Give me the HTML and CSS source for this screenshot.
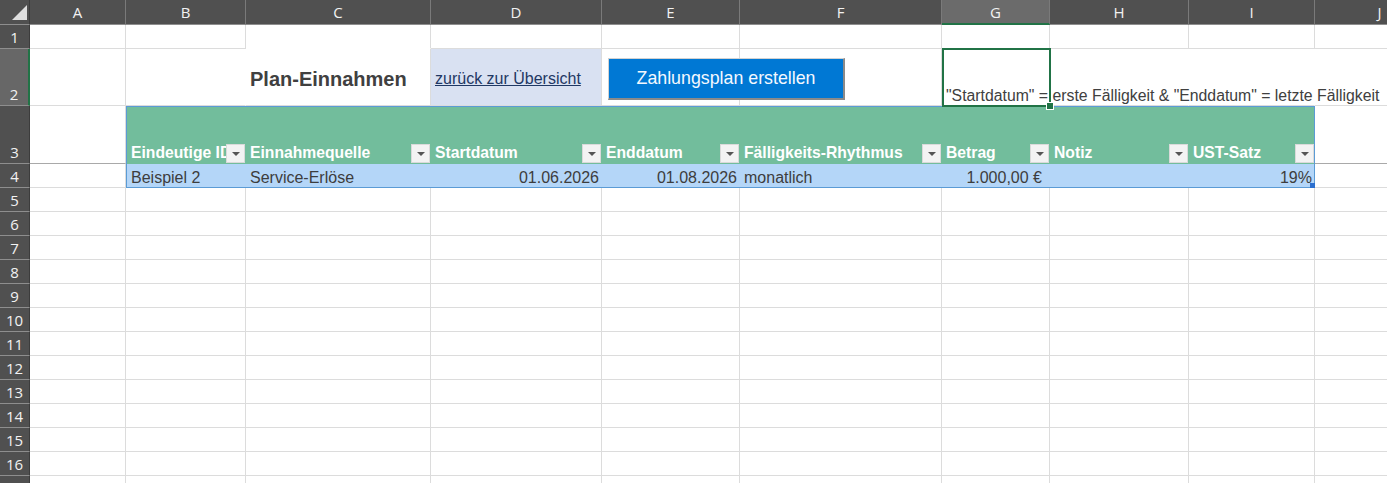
FILE: index.html
```html
<!DOCTYPE html>
<html lang="de">
<head>
<meta charset="utf-8">
<title>Plan-Einnahmen</title>
<link rel="stylesheet" href="styles.css">
</head>
<body>
<div class="sheet">
  <div class="hrow">
    <div class="corner"><svg width="30" height="24" viewBox="0 0 30 24"><polygon points="27,5 27,20 12,20" fill="#dedede"/></svg></div>
    <div class="ch wA">A</div><div class="ch wB">B</div><div class="ch wC">C</div><div class="ch wD">D</div><div class="ch wE">E</div><div class="ch wF">F</div><div class="ch wG sel">G</div><div class="ch wH">H</div><div class="ch wI">I</div><div class="ch wJ">J</div>
  </div>

  <div class="row r24">
    <div class="rh">1</div>
    <div class="c wA"></div><div class="c wB"></div><div class="c wC nob"></div><div class="c wD"></div><div class="c wE"></div><div class="c wF"></div><div class="c wG"></div><div class="c wH"></div><div class="c wI"></div><div class="c wJ"></div>
  </div>

  <div class="row r57">
    <div class="rh sel">2</div>
    <div class="c wA"></div>
    <div class="c wB nor"></div>
    <div class="c wC title">Plan-Einnahmen</div>
    <div class="c wD linkcell"><a class="link" href="#">zurück zur Übersicht</a></div>
    <div class="c wE btncell"><button class="macro" type="button">Zahlungsplan erstellen</button></div>
    <div class="c wF"></div>
    <div class="c wG nor note"><span class="notetext">"Startdatum" = erste Fälligkeit &amp; "Enddatum" = letzte Fälligkeit</span></div>
    <div class="c wH nor"></div><div class="c wI nor"></div><div class="c wJ nor"></div>
  </div>

  <div class="band">
    <div class="stack">
      <div class="rh r58">3</div>
      <div class="rh r24">4</div>
    </div>
    <div class="stack">
      <div class="c wA r58 frz"></div>
      <div class="c wA r24"></div>
    </div>
    <div class="xtable">
      <div class="thead">
        <div class="th tB"><span class="lbl">Eindeutige ID</span><span class="fbtn"></span></div>
        <div class="th tC"><span class="lbl">Einnahmequelle</span><span class="fbtn"></span></div>
        <div class="th tD"><span class="lbl">Startdatum</span><span class="fbtn"></span></div>
        <div class="th tE"><span class="lbl">Enddatum</span><span class="fbtn"></span></div>
        <div class="th tF"><span class="lbl">Fälligkeits-Rhythmus</span><span class="fbtn"></span></div>
        <div class="th tG"><span class="lbl">Betrag</span><span class="fbtn"></span></div>
        <div class="th tH"><span class="lbl">Notiz</span><span class="fbtn"></span></div>
        <div class="th tI"><span class="lbl">UST-Satz</span><span class="fbtn"></span></div>
      </div>
      <div class="tbody">
        <div class="td tB">Beispiel 2</div>
        <div class="td tC">Service-Erlöse</div>
        <div class="td tD num">01.06.2026</div>
        <div class="td tE num">01.08.2026</div>
        <div class="td tF">monatlich</div>
        <div class="td tG num money">1.000,00 €</div>
        <div class="td tH"></div>
        <div class="td tI num pct">19%</div>
      </div>
    </div>
    <div class="stack">
      <div class="c wJ r58 frz"></div>
      <div class="c wJ r24"></div>
    </div>
  </div>

  <div class="row r24"><div class="rh">5</div><div class="c wA"></div><div class="c wB"></div><div class="c wC"></div><div class="c wD"></div><div class="c wE"></div><div class="c wF"></div><div class="c wG"></div><div class="c wH"></div><div class="c wI"></div><div class="c wJ"></div></div>
  <div class="row r24"><div class="rh">6</div><div class="c wA"></div><div class="c wB"></div><div class="c wC"></div><div class="c wD"></div><div class="c wE"></div><div class="c wF"></div><div class="c wG"></div><div class="c wH"></div><div class="c wI"></div><div class="c wJ"></div></div>
  <div class="row r24"><div class="rh">7</div><div class="c wA"></div><div class="c wB"></div><div class="c wC"></div><div class="c wD"></div><div class="c wE"></div><div class="c wF"></div><div class="c wG"></div><div class="c wH"></div><div class="c wI"></div><div class="c wJ"></div></div>
  <div class="row r24"><div class="rh">8</div><div class="c wA"></div><div class="c wB"></div><div class="c wC"></div><div class="c wD"></div><div class="c wE"></div><div class="c wF"></div><div class="c wG"></div><div class="c wH"></div><div class="c wI"></div><div class="c wJ"></div></div>
  <div class="row r24"><div class="rh">9</div><div class="c wA"></div><div class="c wB"></div><div class="c wC"></div><div class="c wD"></div><div class="c wE"></div><div class="c wF"></div><div class="c wG"></div><div class="c wH"></div><div class="c wI"></div><div class="c wJ"></div></div>
  <div class="row r24"><div class="rh">10</div><div class="c wA"></div><div class="c wB"></div><div class="c wC"></div><div class="c wD"></div><div class="c wE"></div><div class="c wF"></div><div class="c wG"></div><div class="c wH"></div><div class="c wI"></div><div class="c wJ"></div></div>
  <div class="row r24"><div class="rh">11</div><div class="c wA"></div><div class="c wB"></div><div class="c wC"></div><div class="c wD"></div><div class="c wE"></div><div class="c wF"></div><div class="c wG"></div><div class="c wH"></div><div class="c wI"></div><div class="c wJ"></div></div>
  <div class="row r24"><div class="rh">12</div><div class="c wA"></div><div class="c wB"></div><div class="c wC"></div><div class="c wD"></div><div class="c wE"></div><div class="c wF"></div><div class="c wG"></div><div class="c wH"></div><div class="c wI"></div><div class="c wJ"></div></div>
  <div class="row r24"><div class="rh">13</div><div class="c wA"></div><div class="c wB"></div><div class="c wC"></div><div class="c wD"></div><div class="c wE"></div><div class="c wF"></div><div class="c wG"></div><div class="c wH"></div><div class="c wI"></div><div class="c wJ"></div></div>
  <div class="row r24"><div class="rh">14</div><div class="c wA"></div><div class="c wB"></div><div class="c wC"></div><div class="c wD"></div><div class="c wE"></div><div class="c wF"></div><div class="c wG"></div><div class="c wH"></div><div class="c wI"></div><div class="c wJ"></div></div>
  <div class="row r24"><div class="rh">15</div><div class="c wA"></div><div class="c wB"></div><div class="c wC"></div><div class="c wD"></div><div class="c wE"></div><div class="c wF"></div><div class="c wG"></div><div class="c wH"></div><div class="c wI"></div><div class="c wJ"></div></div>
  <div class="row r24"><div class="rh">16</div><div class="c wA"></div><div class="c wB"></div><div class="c wC"></div><div class="c wD"></div><div class="c wE"></div><div class="c wF"></div><div class="c wG"></div><div class="c wH"></div><div class="c wI"></div><div class="c wJ"></div></div>
  <div class="row r24"><div class="rh">17</div><div class="c wA"></div><div class="c wB"></div><div class="c wC"></div><div class="c wD"></div><div class="c wE"></div><div class="c wF"></div><div class="c wG"></div><div class="c wH"></div><div class="c wI"></div><div class="c wJ"></div></div>
</div>
</body>
</html>
```

FILE: styles.css
```css
* { box-sizing: border-box; }
html, body { margin: 0; padding: 0; }
body {
  width: 1387px;
  height: 483px;
  overflow: hidden;
  background: #ffffff;
  font-family: "Liberation Sans", Arial, sans-serif;
  color: #404040;
}
.sheet { width: 1445px; }

/* column header bar */
.hrow { display: flex; height: 25px; background: #505050; }
.corner {
  width: 30px; height: 25px; flex: none;
  border-right: 1px solid #3c3c3c;
  border-bottom: 1px solid #8e8e8e;
}
.corner svg { display: block; }
.ch {
  flex: none;
  height: 25px;
  border-right: 1px solid #7a7a7a;
  border-bottom: 1px solid #8e8e8e;
  color: #f2f2f2;
  font-family: "Open Sans", "Noto Sans", sans-serif;
  font-size: 15px;
  display: flex; align-items: center; justify-content: center;
}
.ch.sel { background: #6b6b6b; border-bottom: 2px solid #217346; }

/* widths */
.wA { width: 96px; } .wB { width: 120px; } .wC { width: 185px; } .wD { width: 171px; }
.wE { width: 138px; } .wF { width: 202px; } .wG { width: 108px; } .wH { width: 139px; }
.wI { width: 126px; } .wJ { width: 130px; }
.r24 { height: 24px; } .r57 { height: 57px; } .r58 { height: 58px; }

.row { display: flex; }
.rh {
  width: 30px; flex: none;
  background: #505050;
  color: #f2f2f2;
  border-bottom: 1px solid #8e8e8e;
  border-right: 1px solid #3c3c3c;
  font-family: "Open Sans", "Noto Sans", sans-serif;
  font-size: 15px;
  line-height: 22px;
  display: flex; align-items: flex-end; justify-content: center;
}
.rh.sel { background: #676767; border-right: 2px solid #217346; }

.c {
  flex: none;
  border-right: 1px solid #dcdcdc;
  border-bottom: 1px solid #dcdcdc;
}
.nob { border-bottom-color: transparent; }
.nor { border-right-color: transparent; }
.frz { border-bottom-color: #a9a9a9; }

/* row 2 content */
.title {
  display: flex; align-items: center;
  padding: 4px 0 0 4px;
  font-size: 20px; font-weight: bold; color: #404040;
  white-space: nowrap;
}
.linkcell {
  background: #d9e1f2;
  display: flex; align-items: center;
  padding: 3px 0 0 4px;
  white-space: nowrap;
}
.link { color: #1f3864; font-size: 16px; text-decoration: underline; }
.btncell { display: flex; align-items: flex-start; }
.macro {
  position: relative; z-index: 1;
  flex: none;
  margin: 9px 0 0 6px;
  width: 237px; height: 42px;
  background: #0078d4;
  color: #f4f8ff;
  font-family: "Liberation Sans", Arial, sans-serif;
  font-size: 17.8px;
  border-style: solid;
  border-width: 1px 2px 2px 1px;
  border-color: #d2d2d2 #8a8a8a #8a8a8a #d2d2d2;
  padding: 0;
  text-align: center;
}
.note {
  position: relative; z-index: 2;
  display: flex; align-items: flex-end;
  padding-left: 4px;
  white-space: nowrap;
  overflow: visible;
}
.notetext { font-size: 15.8px; line-height: 18px; color: #404040; }
.note::before {
  content: "";
  position: absolute;
  left: 0; top: -1px; right: -2px; bottom: -2px;
  border: 2px solid #217346;
}
.note::after {
  content: "";
  position: absolute;
  right: -5px; bottom: -5px;
  width: 6px; height: 6px;
  background: #217346;
  border: 1px solid #ffffff;
}

/* rows 3-4 band with table */
.band { display: flex; height: 82px; }
.stack { display: flex; flex-direction: column; flex: none; }
.xtable {
  position: relative;
  flex: none;
  width: 1189px; height: 82px;
  border: 1px solid #5b9bd5;
  display: flex; flex-direction: column;
}
.xtable::after {
  content: "";
  position: absolute;
  right: -1px; bottom: -1px;
  width: 5px; height: 5px;
  background: #2c6fcf;
}
.thead { display: flex; height: 57px; background: #72bd9c; }
.tbody { display: flex; height: 23px; background: #b4d6f8; }
.tB { width: 119px; } .tC { width: 185px; } .tD { width: 171px; } .tE { width: 138px; }
.tF { width: 202px; } .tG { width: 108px; } .tH { width: 139px; } .tI { width: 125px; }
.th {
  flex: none;
  display: flex; align-items: flex-end;
  padding: 0 1px 0 4px;
  color: #ffffff;
  font-weight: bold;
  font-size: 15.7px;
}
.th:last-child { padding-right: 0; }
.lbl {
  flex: 1; min-width: 0;
  overflow: hidden; white-space: nowrap;
  line-height: 18px;
  padding-bottom: 2px;
}
.fbtn {
  flex: none;
  position: relative;
  width: 19px; height: 19px;
  margin-bottom: 1px;
  background: #f3f3f3;
  border: 1px solid #dadada;
}
.fbtn::after {
  content: "";
  position: absolute;
  left: 5px; top: 7px;
  border-left: 4px solid transparent;
  border-right: 4px solid transparent;
  border-top: 4px solid #555555;
}
.td {
  flex: none;
  display: flex; align-items: flex-end;
  padding: 0 4px;
  font-size: 16px; line-height: 18px;
  color: #3d3d3d;
  white-space: nowrap;
}
.num { justify-content: flex-end; padding-right: 3px; }
.money { padding-right: 8px; }
.pct { padding-right: 2px; }
```
